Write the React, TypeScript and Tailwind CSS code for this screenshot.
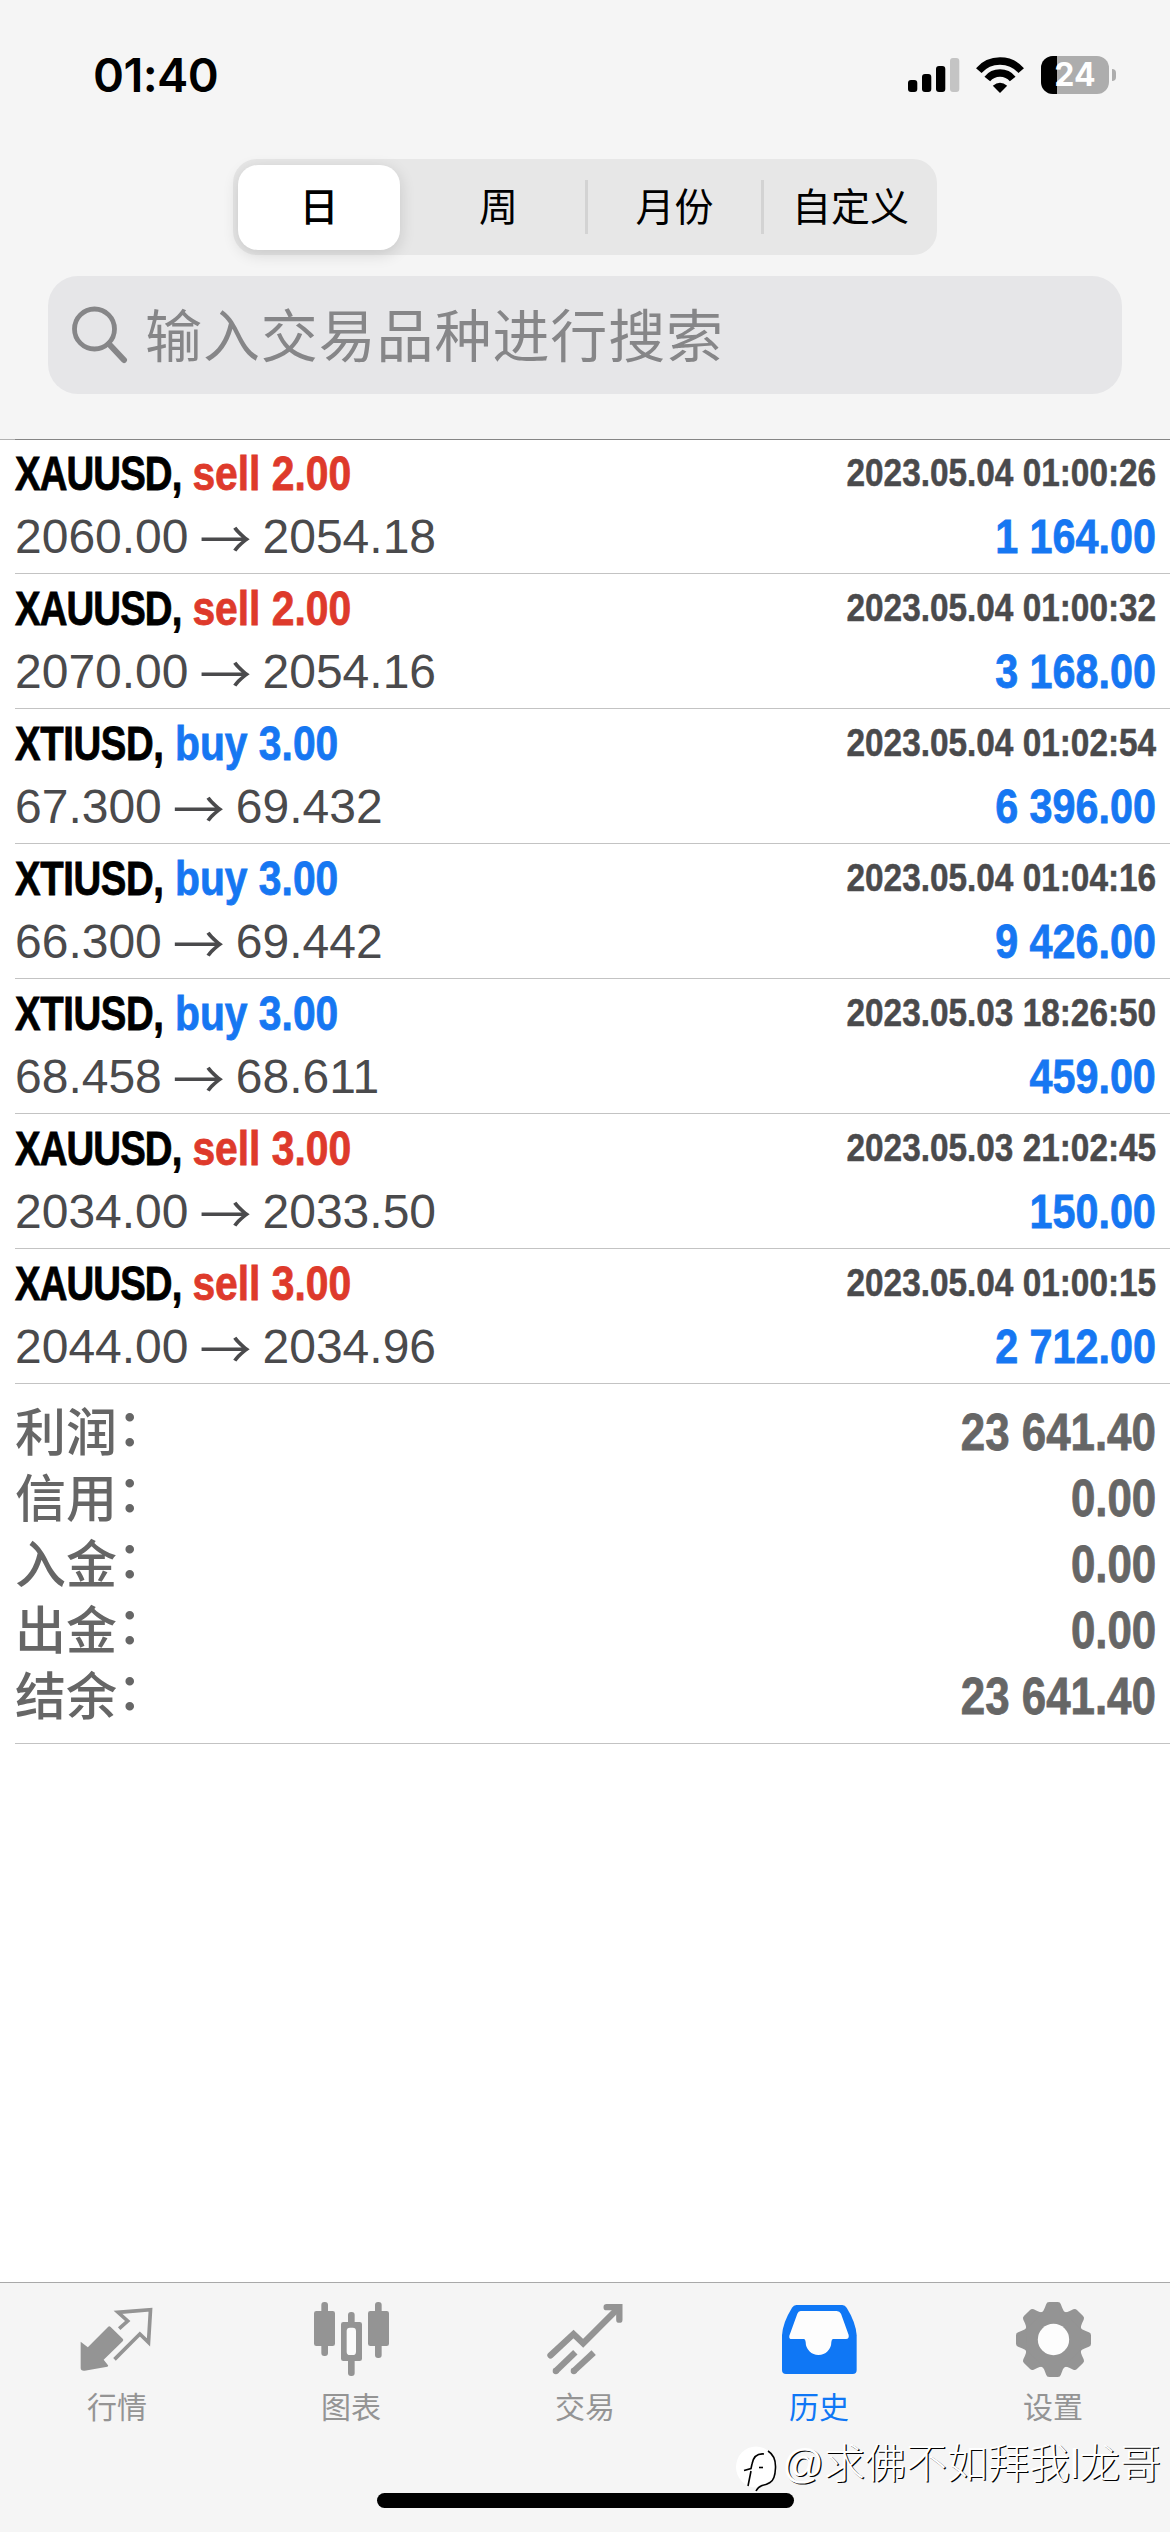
import React, { useState } from 'react';
import { clsx } from 'clsx';

interface Deal {
  symbol: string;
  side: 'buy' | 'sell';
  volume: string;
  open: string;
  close: string;
  time: string;
  profit: string;
}

const deals: Deal[] = [
  { symbol: 'XAUUSD', side: 'sell', volume: '2.00', open: '2060.00', close: '2054.18', time: '2023.05.04 01:00:26', profit: '1 164.00' },
  { symbol: 'XAUUSD', side: 'sell', volume: '2.00', open: '2070.00', close: '2054.16', time: '2023.05.04 01:00:32', profit: '3 168.00' },
  { symbol: 'XTIUSD', side: 'buy', volume: '3.00', open: '67.300', close: '69.432', time: '2023.05.04 01:02:54', profit: '6 396.00' },
  { symbol: 'XTIUSD', side: 'buy', volume: '3.00', open: '66.300', close: '69.442', time: '2023.05.04 01:04:16', profit: '9 426.00' },
  { symbol: 'XTIUSD', side: 'buy', volume: '3.00', open: '68.458', close: '68.611', time: '2023.05.03 18:26:50', profit: '459.00' },
  { symbol: 'XAUUSD', side: 'sell', volume: '3.00', open: '2034.00', close: '2033.50', time: '2023.05.03 21:02:45', profit: '150.00' },
  { symbol: 'XAUUSD', side: 'sell', volume: '3.00', open: '2044.00', close: '2034.96', time: '2023.05.04 01:00:15', profit: '2 712.00' },
];

const summary = [
  { label: '利润', value: '23 641.40' },
  { label: '信用', value: '0.00' },
  { label: '入金', value: '0.00' },
  { label: '出金', value: '0.00' },
  { label: '结余', value: '23 641.40' },
];

const periods = ['日', '周', '月份', '自定义'];

const QuotesIcon = () => (
  <svg viewBox="0 0 225 225" className="size-[75px]" fill="currentColor">
    <path d="M2 119 L23.500 136 L84 75 Q88 71 92 75 L128 110 Q132 114 128 118 L71 173 L84 190 Q86 193 82 194 L14 206 Q2 207 2 198 Z" />
    <path
      d="M117.500 80 L143 57 L114 31 L211.500 23 L205.500 121 L179.500 96 L103.500 172"
      fill="none"
      stroke="currentColor"
      strokeWidth="11"
    />
  </svg>
);

const ChartsIcon = () => (
  <svg viewBox="0 0 225 225" className="size-[75px]" fill="currentColor">
    <rect x="22" y="0" width="20" height="162" rx="9" />
    <rect x="0" y="27" width="63" height="105" rx="7" />
    <rect x="102" y="30" width="20" height="192" rx="9" />
    <rect x="81" y="60" width="63" height="117" rx="7" />
    <rect x="98" y="77" width="28" height="82" rx="10" fill="#fafafa" />
    <rect x="183" y="0" width="20" height="168" rx="9" />
    <rect x="162" y="27" width="63" height="105" rx="7" />
  </svg>
);

const TradeIcon = () => (
  <svg viewBox="0 0 225 225" className="size-[75px] overflow-visible" fill="none" stroke="currentColor" strokeWidth="19">
    <path d="M7.500 160 L76.500 96 L105.500 124 L212 17" strokeLinecap="round" />
    <path d="M176 15.500 H214 V53" strokeLinecap="round" />
    <path d="M23.500 207 L82 151" />
    <path d="M77.500 207 L137 152" />
    <circle cx="23.500" cy="207" r="9.500" fill="currentColor" stroke="none" />
    <circle cx="77.500" cy="207" r="9.500" fill="currentColor" stroke="none" />
  </svg>
);

const HistoryIcon = () => (
  <svg viewBox="0 0 225 225" className="size-[75px]" fill="currentColor">
    <path d="M43 9 H181 Q189 9 194 17 Q222 62 224 100 V204 Q224 216 212 216 H12 Q0 216 0 204 V100 Q2 62 30 17 Q35 9 43 9 Z" />
    <path
      d="M56 27 H164 Q173 27 177 35 L200 99 Q202 111 192 111 H153 Q149 111 148 120 A38.500 39 0 0 1 71 120 Q70 111 66 111 H29 Q20 111 22 101 L46 35 Q49 27 56 27 Z"
      fill="#fdfdfd"
    />
  </svg>
);

const SettingsIcon = () => (
  <svg viewBox="0 0 225 225" className="size-[75px]" fill="currentColor">
    <circle cx="112.500" cy="112.500" r="89" />
    {[0, 45, 90, 135, 180, 225, 270, 315].map((angle) => (
      <path
        key={angle}
        d="M-36 -80 Q-29 -86 -26 -95 L-22 -106 Q-20 -112.500 -13 -112.500 H13 Q20 -112.500 22 -106 L26 -95 Q29 -86 36 -80 Z"
        transform={`translate(112.500 112.500) rotate(${angle})`}
      />
    ))}
    <circle cx="112.500" cy="112.500" r="47" fill="#fdfdfd" />
  </svg>
);

const tabs = [
  { id: 'quotes', label: '行情', icon: QuotesIcon },
  { id: 'charts', label: '图表', icon: ChartsIcon },
  { id: 'trade', label: '交易', icon: TradeIcon },
  { id: 'history', label: '历史', icon: HistoryIcon },
  { id: 'settings', label: '设置', icon: SettingsIcon },
];

const StatusBar: React.FC = () => (
  <div className="flex h-[149px] items-center justify-between pl-[93px] pr-[54px]">
    <span className="font-['Inter',sans-serif] text-[47px] font-semibold leading-none tracking-[-0.6px]">01:40</span>
    <div className="flex items-center">
      <svg viewBox="0 0 52 34" className="mr-[16px] h-[34px] w-[52px]">
        <rect x="0" y="22" width="9.300" height="12" rx="3" />
        <rect x="14" y="16" width="9.300" height="18" rx="3" />
        <rect x="28" y="8" width="9.300" height="26" rx="3" />
        <rect x="42" y="0" width="9.300" height="34" rx="3" fill="#c4c4c4" />
      </svg>
      <svg viewBox="0 0 48 36" className="mr-[17px] h-[36px] w-[48px]" fill="none" stroke="#000" strokeWidth="7.400">
        <path d="M2.800 13.600 A28.300 28.300 0 0 1 45.200 13.600" />
        <path d="M11.300 22 A16.500 16.500 0 0 1 36.700 22" />
        <path d="M16.800 28.800 Q24 22.500 31.200 28.800 L24 36 Z" fill="#000" stroke="none" />
      </svg>
      <div className="relative flex h-[38px] w-[68px] items-center justify-center overflow-hidden rounded-[12px] bg-[#adadad]">
        <div className="absolute inset-y-0 left-0 w-[16px] bg-black" />
        <span className="relative font-['Inter',sans-serif] text-[32px] font-bold leading-none text-white">24</span>
      </div>
      <div className="ml-[3px] h-[12px] w-[4px] rounded-r-full bg-[#adadad]" />
    </div>
  </div>
);

const DealRow: React.FC<{ deal: Deal }> = ({ deal }) => (
  <li className="flex h-[135px] flex-col border-b border-[#c3c3c3] pr-[14px] pt-[8px]">
    <div className="flex h-[54px] items-center justify-between font-bold">
      <p className="origin-left scale-x-[0.85] whitespace-nowrap text-[48px] leading-none [-webkit-text-stroke:0.8px]">
        <span
          className={clsx(
            'inline-block origin-left scale-x-[0.94]',
            deal.symbol === 'XTIUSD' ? 'mr-[-11px] tracking-[-0.5px]' : 'mr-[-13px] tracking-[-1.1px]'
          )}
        >
          {deal.symbol},
        </span>{' '}
        <span className={deal.side === 'buy' ? 'text-[#1677f2]' : 'text-[#de3a2b]'}>
          {deal.side} {deal.volume}
        </span>
      </p>
      <p className="origin-right scale-x-[0.855] whitespace-nowrap pb-[3px] text-[39px] leading-none text-[#4a4a4c] [-webkit-text-stroke:0.5px]">
        {deal.time}
      </p>
    </div>
    <div className="flex h-[72px] items-center justify-between text-[48px] leading-none">
      <p className="flex items-center text-[#4a4a4c]">
        {deal.open}
        <span className="mx-[11px] font-['Noto_Sans_CJK_SC',sans-serif] text-[52px] leading-[48px]">→</span>
        {deal.close}
      </p>
      <p className="origin-right scale-x-[0.86] whitespace-nowrap font-bold text-[#1677f2] [-webkit-text-stroke:0.8px]">{deal.profit}</p>
    </div>
  </li>
);

const Watermark: React.FC = () => (
  <div className="absolute bottom-[43px] right-[9px] flex items-center">
    <svg viewBox="0 0 44 50" className="h-[50px] w-[44px] overflow-visible" fill="none" stroke="#000" strokeWidth="1.600">
      <ellipse cx="18" cy="28" rx="20" ry="20.500" fill="#fff" stroke="none" />
      <path d="M26 15 Q16 14 14 25 L13 29.500 L6 31.500 M13 32 L10 47" />
      <path d="M21 28.500 H25" />
      <path d="M30 12 Q38 17 37.500 29 Q37 41 32 43.500 Q28 46 24 46.500 Q20 48 18 52" />
    </svg>
    <span className="whitespace-nowrap font-['Liberation_Sans','Noto_Sans_CJK_SC',sans-serif] text-[41px] font-light leading-[50px] text-white [text-shadow:1.3px_1.3px_0_#000]">
      @求佛不如拜我l龙哥
    </span>
  </div>
);

export default function App() {
  const [period, setPeriod] = useState('日');
  const [activeTab, setActiveTab] = useState('history');

  return (
    <div className="flex h-[2532px] w-[1170px] flex-col overflow-hidden bg-white font-['Liberation_Sans','Noto_Sans_CJK_SC',sans-serif] text-black">
      <header className="flex h-[439px] shrink-0 flex-col bg-[#f5f5f5]">
        <StatusBar />

        <div className="mx-auto mt-[10px] grid h-[96px] w-[704px] grid-cols-4 items-center rounded-[24px] bg-[#e7e7e7]">
          {periods.map((p, i) => (
            <div key={p} className="flex items-center">
              <div className={clsx('h-[54px] w-[3px]', i > 1 && 'bg-[#d3d3d3]')} />
              <button
                onClick={() => setPeriod(p)}
                className={clsx(
                  'flex h-[85px] items-center justify-center rounded-[20px] pb-[5px] font-["Noto_Sans_CJK_SC",sans-serif] text-[39px] leading-none',
                  period === p
                    ? 'ml-[2px] w-[162px] bg-white font-medium shadow-[0_4px_16px_rgba(0,0,0,0.14)]'
                    : 'w-[173px]'
                )}
              >
                {p}
              </button>
            </div>
          ))}
        </div>

        <div className="mx-[48px] mt-[21px] flex h-[118px] items-center rounded-[30px] bg-[#e6e6e8] pl-[24px]">
          <svg viewBox="0 0 56 58" className="h-[58px] w-[56px]" fill="none" stroke="#868688" strokeWidth="4.800">
            <circle cx="22.500" cy="23" r="20" />
            <path d="M37 38 L52 54" strokeWidth="6" strokeLinecap="round" />
          </svg>
          <span className="ml-[17px] pb-[6px] font-['Noto_Sans_CJK_SC',sans-serif] text-[57px] leading-none tracking-[0.900px] text-[#868688]">
            输入交易品种进行搜索
          </span>
        </div>
      </header>

      <div className="h-px shrink-0 bg-[#b2b2b2] pl-[15px]">
        <div className="h-px bg-[#858585]" />
      </div>

      <main className="-mt-px flex-1 pl-[15px]">
        <ul>
          {deals.map((deal) => (
            <DealRow key={deal.time} deal={deal} />
          ))}
        </ul>
        <dl className="border-b border-[#c3c3c3] pb-[14px] pr-[14px] pt-[15px] text-[51px] leading-none text-[#666]">
          {summary.map((row) => (
            <div key={row.label} className="flex h-[66px] items-center justify-between">
              <dt className="pb-[5px] font-['Noto_Sans_CJK_SC',sans-serif] font-medium">
                {row.label}
                <span className="relative -top-[5px]">：</span>
              </dt>
              <dd className="origin-right scale-x-[0.86] whitespace-nowrap font-bold [-webkit-text-stroke:0.8px]">{row.value}</dd>
            </div>
          ))}
        </dl>
      </main>

      <nav className="relative flex h-[250px] shrink-0 border-t border-[#a9a9a9] bg-[#f5f5f5]">
        {tabs.map(({ id, label, icon: Icon }) => (
          <button
            key={id}
            onClick={() => setActiveTab(id)}
            className={clsx(
              'flex flex-1 flex-col items-center pt-[19px]',
              activeTab === id ? 'text-[#0f77f5]' : 'text-[#949494]'
            )}
          >
            <Icon />
            <span className="mt-[13px] font-['Noto_Sans_CJK_SC',sans-serif] text-[30px] leading-[30px]">{label}</span>
          </button>
        ))}
        <div className="absolute bottom-[24px] left-[377px] h-[15px] w-[417px] rounded-full bg-black" />
        <Watermark />
      </nav>
    </div>
  );
}
